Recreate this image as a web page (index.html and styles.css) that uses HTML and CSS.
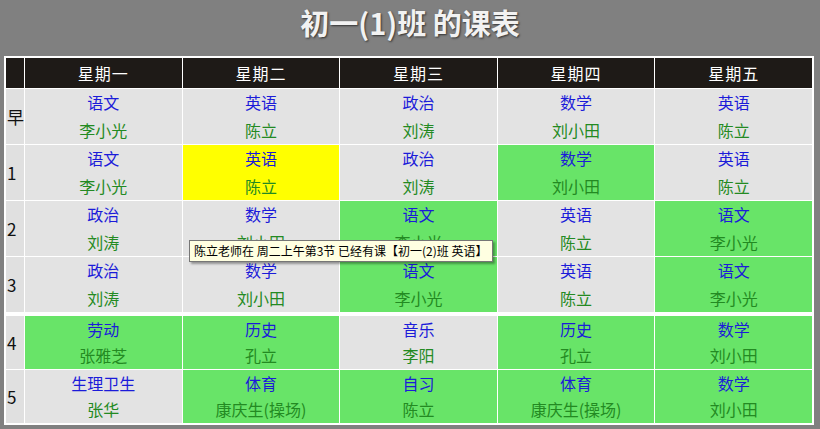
FILE: index.html
```html
<!DOCTYPE html>
<html lang="zh-CN">
<head>
<meta charset="utf-8">
<title>初一(1)班 的课表</title>
<link rel="stylesheet" href="styles.css">
</head>
<body>
<h1 class="title">初一(1)班 的课表</h1>
<div class="wrap">
<table class="timetable">
  <colgroup><col class="c-head"><col><col><col><col><col></colgroup>
  <thead>
    <tr><th></th><th>星期一</th><th>星期二</th><th>星期三</th><th>星期四</th><th>星期五</th></tr>
  </thead>
  <tbody>
    <tr>
      <td class="rh">早</td>
      <td><div class="sub">语文</div><div class="tch">李小光</div></td>
      <td><div class="sub">英语</div><div class="tch">陈立</div></td>
      <td><div class="sub">政治</div><div class="tch">刘涛</div></td>
      <td><div class="sub">数学</div><div class="tch">刘小田</div></td>
      <td><div class="sub">英语</div><div class="tch">陈立</div></td>
    </tr>
    <tr>
      <td class="rh">1</td>
      <td><div class="sub">语文</div><div class="tch">李小光</div></td>
      <td class="yellow"><div class="sub">英语</div><div class="tch">陈立</div></td>
      <td><div class="sub">政治</div><div class="tch">刘涛</div></td>
      <td class="green"><div class="sub">数学</div><div class="tch">刘小田</div></td>
      <td><div class="sub">英语</div><div class="tch">陈立</div></td>
    </tr>
    <tr>
      <td class="rh">2</td>
      <td><div class="sub">政治</div><div class="tch">刘涛</div></td>
      <td><div class="sub">数学</div><div class="tch">刘小田</div></td>
      <td class="green"><div class="sub">语文</div><div class="tch">李小光</div></td>
      <td><div class="sub">英语</div><div class="tch">陈立</div></td>
      <td class="green"><div class="sub">语文</div><div class="tch">李小光</div></td>
    </tr>
    <tr>
      <td class="rh">3</td>
      <td><div class="sub">政治</div><div class="tch">刘涛</div></td>
      <td><div class="sub">数学</div><div class="tch">刘小田</div></td>
      <td class="green"><div class="sub">语文</div><div class="tch">李小光</div></td>
      <td><div class="sub">英语</div><div class="tch">陈立</div></td>
      <td class="green"><div class="sub">语文</div><div class="tch">李小光</div></td>
    </tr>
    <tr class="spacer"><td colspan="6"></td></tr>
    <tr class="pm">
      <td class="rh">4</td>
      <td class="green"><div class="sub">劳动</div><div class="tch">张雅芝</div></td>
      <td class="green"><div class="sub">历史</div><div class="tch">孔立</div></td>
      <td><div class="sub">音乐</div><div class="tch">李阳</div></td>
      <td class="green"><div class="sub">历史</div><div class="tch">孔立</div></td>
      <td class="green"><div class="sub">数学</div><div class="tch">刘小田</div></td>
    </tr>
    <tr class="pm">
      <td class="rh">5</td>
      <td><div class="sub">生理卫生</div><div class="tch">张华</div></td>
      <td class="green"><div class="sub">体育</div><div class="tch">康庆生(操场)</div></td>
      <td class="green"><div class="sub">自习</div><div class="tch">陈立</div></td>
      <td class="green"><div class="sub">体育</div><div class="tch">康庆生(操场)</div></td>
      <td class="green"><div class="sub">数学</div><div class="tch">刘小田</div></td>
    </tr>
  </tbody>
</table>
<div class="tooltip">陈立老师在 周二上午第3节 已经有课【初一(2)班 英语】</div>
</div>
</body>
</html>
```
FILE: styles.css
```css
html, body {
  margin: 0;
  padding: 0;
  background: #808080;
  font-family: "Noto Sans CJK SC", "Noto Sans", sans-serif;
}

.title {
  margin: 0 0 12px 0;
  height: 44px;
  line-height: 44px;
  text-align: center;
  font-size: 29px;
  font-weight: bold;
  color: #f2f2f2;
  text-shadow: 1px 1px 2px #333;
}

.wrap {
  position: relative;
  padding-left: 4px;
}

.timetable {
  width: 810px;
  border-collapse: separate;
  border-spacing: 1px;
  border: 1px solid #fff;
  background: #fff;
  table-layout: fixed;
}

.c-head {
  width: 18px;
}

.timetable th {
  height: 30px;
  padding: 0;
  background: #1e1a17;
  color: #fff;
  font-size: 16px;
  font-weight: normal;
  letter-spacing: 1px;
}

.timetable td {
  height: 55px;
  padding: 0;
  background: #e3e3e3;
  text-align: center;
  vertical-align: middle;
  font-size: 16px;
}

.timetable tr.pm td {
  height: 53px;
}

.timetable td.rh {
  background: #e0e0e0;
  color: #111;
  font-size: 17px;
  text-align: left;
  padding-left: 1px;
}

.timetable td.green {
  background: #68e468;
}

.timetable td.yellow {
  background: #ffff00;
}

.timetable tr.spacer td {
  height: 2px;
  background: #fff;
}

.sub {
  line-height: 27px;
  color: #1b1bd9;
}

.tch {
  line-height: 28px;
  color: #238a22;
}

.pm .sub {
  line-height: 26px;
}

.pm .tch {
  line-height: 27px;
}

.tooltip {
  position: absolute;
  left: 189px;
  top: 184px;
  height: 20px;
  line-height: 20px;
  padding: 0 4px;
  background: #ffffe1;
  border: 1px solid #767676;
  box-shadow: 2px 2px 2px rgba(0, 0, 0, 0.35);
  font-size: 12px;
  color: #000;
  white-space: nowrap;
}
```
